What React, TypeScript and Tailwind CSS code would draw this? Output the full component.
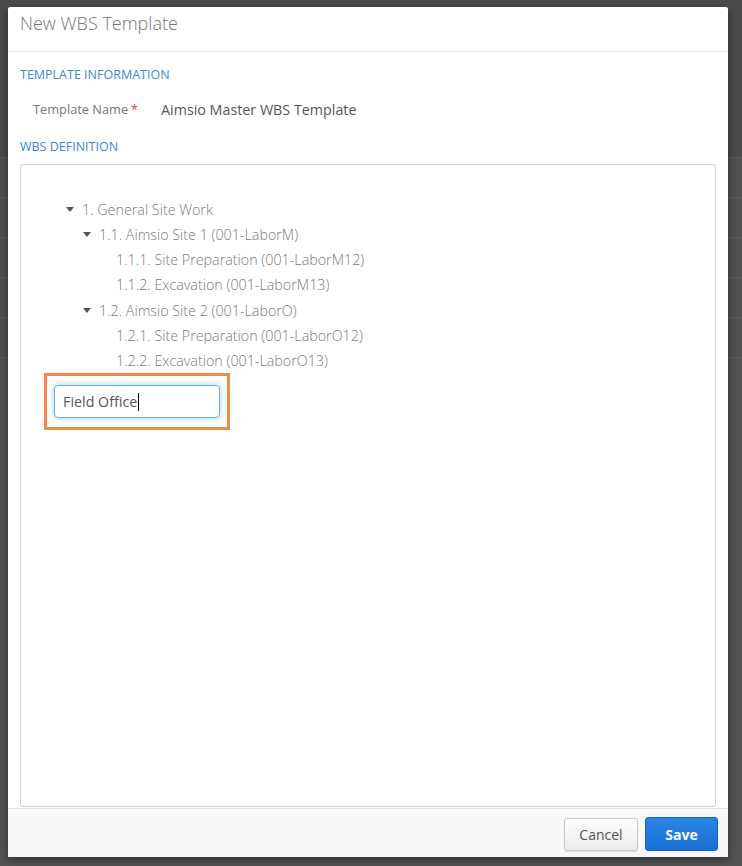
import { useState } from "react";

type Node = {
  label: string;
  level: number;
  expanded?: boolean;
};

const nodes: Node[] = [
  { label: "1. General Site Work", level: 0, expanded: true },
  { label: "1.1. Aimsio Site 1 (001-LaborM)", level: 1, expanded: true },
  { label: "1.1.1. Site Preparation (001-LaborM12)", level: 2 },
  { label: "1.1.2. Excavation (001-LaborM13)", level: 2 },
  { label: "1.2. Aimsio Site 2 (001-LaborO)", level: 1, expanded: true },
  { label: "1.2.1. Site Preparation (001-LaborO12)", level: 2 },
  { label: "1.2.2. Excavation (001-LaborO13)", level: 2 },
];

const indent = ["pl-[45px]", "pl-[62px]", "pl-[79px]"];

function Caret() {
  return (
    <svg width="8" height="5" viewBox="0 0 8 5" className="fill-[#555]">
      <path d="M0 0 L8 0 L4 5 Z" />
    </svg>
  );
}

function TreeRow({ node }: { node: Node }) {
  return (
    <div className={`flex items-center h-[25.2px] ${indent[node.level]}`}>
      <span className="w-[16px] flex items-center">
        {node.expanded !== undefined && <Caret />}
      </span>
      <span className="text-[14.3px] font-light text-[#7a7a7a] whitespace-nowrap">
        {node.label}
      </span>
    </div>
  );
}

function Backdrop() {
  return (
    <div className="absolute inset-0 flex flex-col bg-[#4a4a4a]">
      <div className="h-[157px] shrink-0" />
      {[0, 1, 2, 3, 4].map((i) => (
        <div key={i} className="h-[40px] shrink-0 border-t border-[#5c5c5c] bg-[#505050]" />
      ))}
      <div className="flex-1 border-t border-[#5c5c5c] bg-[#525252]" />
    </div>
  );
}

export default function App() {
  const [name] = useState("Aimsio Master WBS Template");

  return (
    <div
      className="relative w-[742px] h-[866px] overflow-hidden"
      style={{ fontFamily: '"Open Sans", "Noto Sans", sans-serif' }}
    >
      <Backdrop />
      <div className="absolute left-[8px] top-[7px] w-[720px] h-[850px] bg-white rounded-[2px] flex flex-col shadow-[0_3px_9px_rgba(0,0,0,0.4)]">
        <div className="h-[45px] shrink-0 border-b border-[#e5e5e5] px-[12px] pt-[3px]">
          <h1 className="text-[18px] leading-[26px] font-light text-[#777]">New WBS Template</h1>
        </div>

        <div className="flex-1 flex flex-col px-[12px] min-h-0">
          <div className="mt-[15px] text-[12.5px] leading-[16px] uppercase text-[#3b88d4]">
            Template Information
          </div>
          <div className="mt-[17px] flex items-center h-[20px]">
            <span className="ml-[13px] w-[128px] text-[12.8px] text-[#777]">
              Template Name<span className="ml-[3px] text-[#e0433a]">*</span>
            </span>
            <span className="text-[14.3px] text-[#555]">{name}</span>
          </div>
          <div className="mt-[19px] text-[12.5px] leading-[16px] uppercase text-[#3b88d4]">
            WBS Definition
          </div>
          <div className="mt-[9px] h-[643px] border border-[#d2d2d2] rounded-[3px] pt-[32px]">
            {nodes.map((n) => (
              <TreeRow key={n.label} node={n} />
            ))}
            <div className="ml-[23px] w-[186px] border-[3px] border-[#f0894a] px-[7px] py-[9px]">
              <div className="h-[33px] rounded-[4px] border border-[#66afe9] shadow-[0_0_6px_rgba(102,175,233,0.6)] flex items-center pl-[8px]">
                <span className="text-[14.3px] text-[#555]">Field Office</span>
                <span className="ml-px w-px h-[18px] bg-black" />
              </div>
            </div>
          </div>
        </div>

        <div className="h-[49px] shrink-0 mt-[1px] border-t border-[#e5e5e5] bg-[#f8f8f8] flex items-center justify-end gap-[7px] pr-[10px] pt-[2px]">
          <button className="w-[74px] h-[33px] rounded-[3px] border border-[#c9c9c9] bg-gradient-to-b from-[#fdfdfd] to-[#ececec] text-[14px] text-[#555] shadow-[0_1px_1px_rgba(0,0,0,0.12)]">
            Cancel
          </button>
          <button className="w-[73px] h-[34px] rounded-[3px] border border-[#1563c2] bg-gradient-to-b from-[#2a84e6] to-[#1a6fd2] text-[14px] font-bold text-white">
            Save
          </button>
        </div>
      </div>
    </div>
  );
}
